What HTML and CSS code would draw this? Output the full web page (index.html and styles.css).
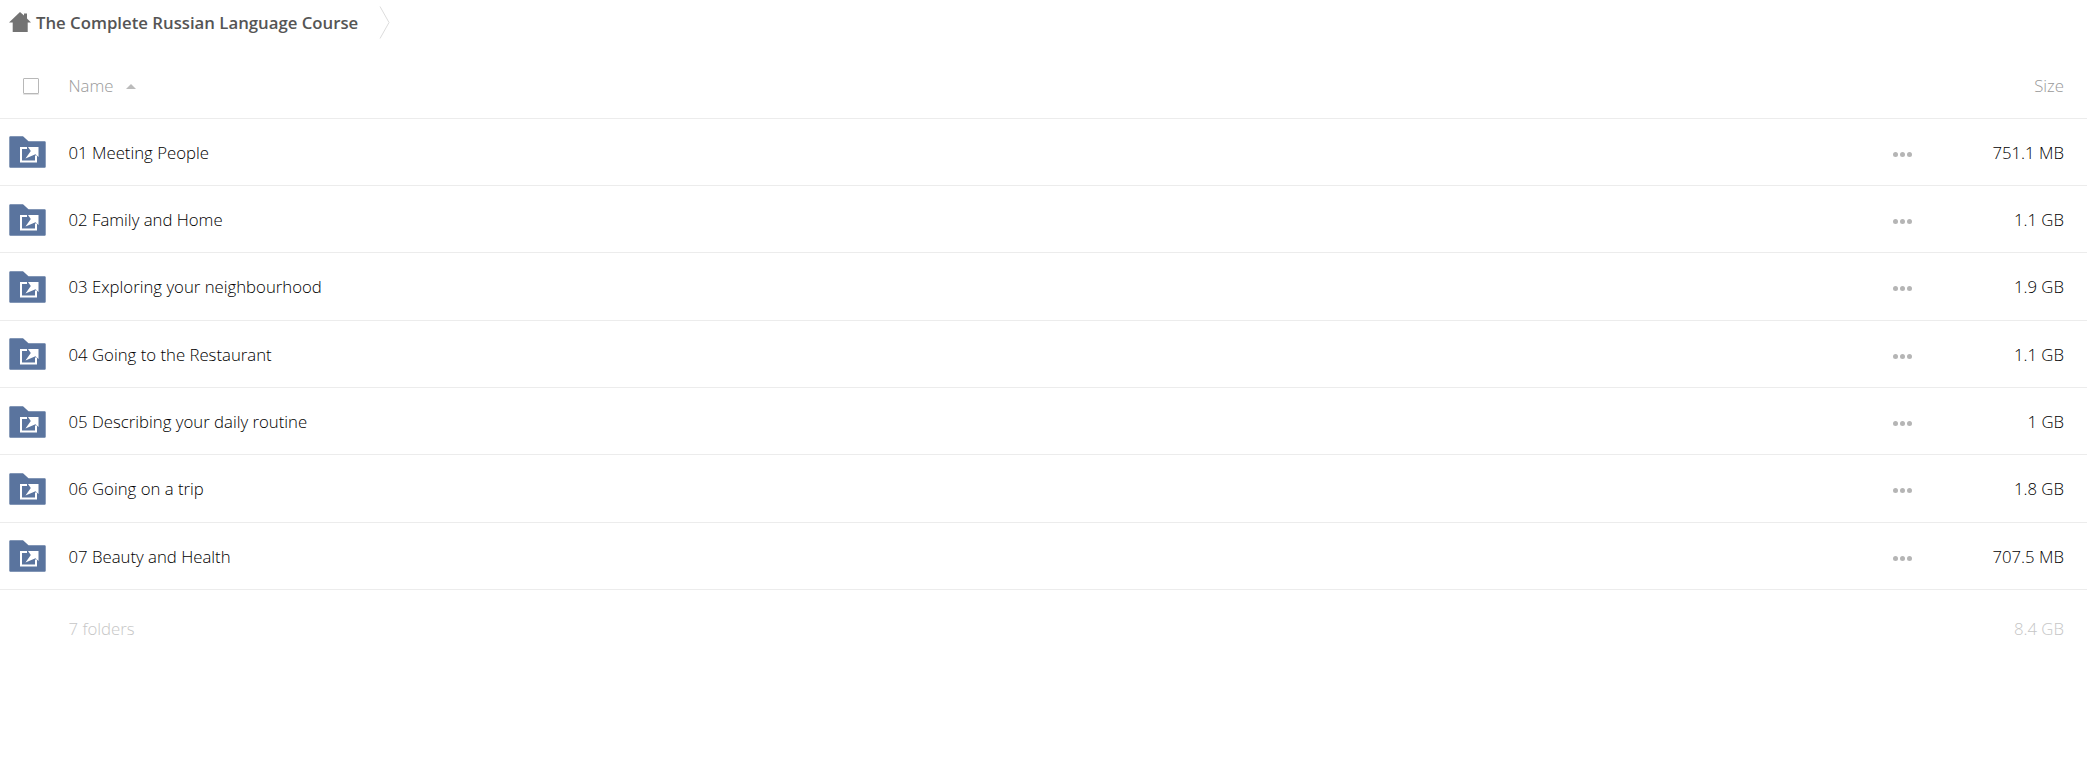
FILE: index.html
```html
<!DOCTYPE html>
<html lang="en">
	<head>
		<meta charset="utf-8" />
		<title>The Complete Russian Language Course</title>
		<link rel="stylesheet" href="styles.css">
	</head>
	<body>
		<svg class="defs" width="0" height="0">
			<symbol id="folder-shared" viewBox="0 0 37 32">
				<path d="M1.300 0.300H14L19.500 5.300H35.700a1 1 0 0 1 1 1V30.700a1 1 0 0 1-1 1H1.300a1 1 0 0 1-1-1V1.300a1 1 0 0 1 1-1Z" fill="#5a749e"/>
				<path d="M18 12H12V25.500H27V19.500" fill="none" stroke="#fff" stroke-width="2"/>
				<path d="M16.500 22.500L21.800 15L19 11H29.500V21L26.500 18.300Z" fill="#fff"/>
			</symbol>
		</svg>

		<nav class="breadcrumb">
			<svg class="home" viewBox="0 0 22 20">
				<path d="M11 0L15 3.600V1.500H18V6.500L22 10.500H18.700V20H3.700V10.500H0Z" fill="#737373"/>
			</svg>
			<span class="crumb">The Complete Russian Language Course</span>
			<svg class="crumb-sep" viewBox="0 0 11 33">
				<path d="M1 0.500L10 16.500L1 32.500" fill="none" stroke="#dcdcdc" stroke-width="1"/>
			</svg>
		</nav>

		<table class="files">
			<thead>
				<tr>
					<th class="col-check"><span class="checkbox"></span></th>
					<th class="col-name">Name <span class="sort"></span></th>
					<th class="col-actions"></th>
					<th class="col-size">Size</th>
				</tr>
			</thead>
			<tbody>
				<tr>
					<td class="col-check"><svg class="folder"><use href="#folder-shared"/></svg></td>
					<td class="col-name">01 Meeting People</td>
					<td class="col-actions"><span class="dots"><i></i><i></i><i></i></span></td>
					<td class="col-size">751.1 MB</td>
				</tr>
				<tr>
					<td class="col-check"><svg class="folder"><use href="#folder-shared"/></svg></td>
					<td class="col-name">02 Family and Home</td>
					<td class="col-actions"><span class="dots"><i></i><i></i><i></i></span></td>
					<td class="col-size">1.1 GB</td>
				</tr>
				<tr>
					<td class="col-check"><svg class="folder"><use href="#folder-shared"/></svg></td>
					<td class="col-name">03 Exploring your neighbourhood</td>
					<td class="col-actions"><span class="dots"><i></i><i></i><i></i></span></td>
					<td class="col-size">1.9 GB</td>
				</tr>
				<tr>
					<td class="col-check"><svg class="folder"><use href="#folder-shared"/></svg></td>
					<td class="col-name">04 Going to the Restaurant</td>
					<td class="col-actions"><span class="dots"><i></i><i></i><i></i></span></td>
					<td class="col-size">1.1 GB</td>
				</tr>
				<tr>
					<td class="col-check"><svg class="folder"><use href="#folder-shared"/></svg></td>
					<td class="col-name">05 Describing your daily routine</td>
					<td class="col-actions"><span class="dots"><i></i><i></i><i></i></span></td>
					<td class="col-size">1 GB</td>
				</tr>
				<tr>
					<td class="col-check"><svg class="folder"><use href="#folder-shared"/></svg></td>
					<td class="col-name">06 Going on a trip</td>
					<td class="col-actions"><span class="dots"><i></i><i></i><i></i></span></td>
					<td class="col-size">1.8 GB</td>
				</tr>
				<tr>
					<td class="col-check"><svg class="folder"><use href="#folder-shared"/></svg></td>
					<td class="col-name">07 Beauty and Health</td>
					<td class="col-actions"><span class="dots"><i></i><i></i><i></i></span></td>
					<td class="col-size">707.5 MB</td>
				</tr>
			</tbody>
			<tfoot>
				<tr>
					<td class="col-check"></td>
					<td class="col-name">7 folders</td>
					<td class="col-actions"></td>
					<td class="col-size">8.4 GB</td>
				</tr>
			</tfoot>
		</table>
	</body>
</html>
```

FILE: styles.css
```css
html,
body {
	margin: 0;
	padding: 0;
	background-color: #fff;
}

body {
	color: #000;
	font-family: "Open Sans", "Liberation Sans", sans-serif;
	font-size: 16.750px;
	font-weight: 300;
}

.defs {
	display: block;
}

.breadcrumb {
	display: flex;
	align-items: center;
	height: 46px;
	padding-bottom: 2px;
	padding-left: 9px;
	box-sizing: border-box;
}

.home {
	width: 22px;
	height: 20px;
}

.crumb {
	margin-left: 5px;
	color: #555;
	font-weight: 600;
}

.crumb-sep {
	width: 11px;
	height: 33px;
	margin-left: 21px;
}

.files {
	width: 100%;
	border-collapse: collapse;
	table-layout: fixed;
}

.files th,
.files td {
	padding: 0;
	font-weight: 300;
	text-align: left;
}

.files thead tr {
	height: 72px;
	border-bottom: 1px solid #ececec;
}

.files thead th {
	padding-top: 8px;
	color: #999;
}

.files tbody tr {
	height: 67.350px;
	border-bottom: 1px solid #ececec;
}

.files tbody td {
	padding-top: 1px;
}

.files tfoot tr {
	height: 78px;
}

.files tfoot td {
	color: #c6c6c6;
}

.col-check {
	width: 68.500px;
}

.col-actions {
	width: 24px;
}

.files .col-size {
	width: 147px;
	padding-right: 23px;
	text-align: right;
}

.checkbox {
	display: block;
	box-sizing: border-box;
	width: 16px;
	height: 16px;
	margin-left: 23px;
	border: 1px solid #b8b8b8;
	border-radius: 1px;
	box-shadow: 0 1px 0 #e4e4e4;
}

.sort {
	display: inline-block;
	margin-left: 8px;
	vertical-align: 3px;
	border-right: 5px solid transparent;
	border-bottom: 5px solid #bbb;
	border-left: 5px solid transparent;
}

.folder {
	display: block;
	width: 37px;
	height: 32px;
	margin-left: 9px;
}

.dots {
	display: flex;
	gap: 2px;
	margin-top: 4px;
}

.dots i {
	width: 5px;
	height: 5px;
	border-radius: 50%;
	background-color: #b5b5b5;
}
```
